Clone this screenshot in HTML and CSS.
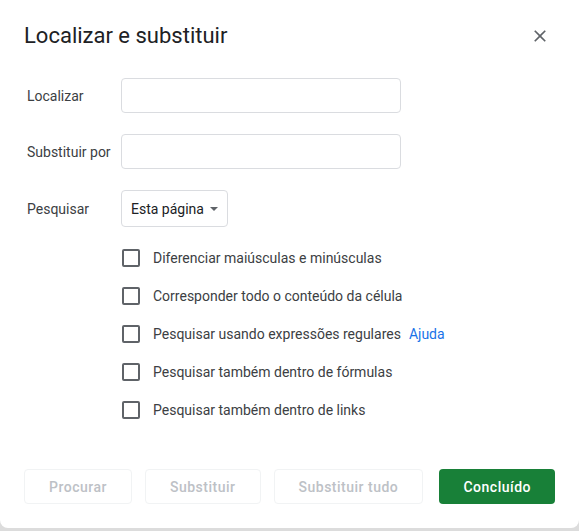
FILE: index.html
```html
<!DOCTYPE html>
<html lang="pt">
<head>
<meta charset="utf-8">
<title>Localizar e substituir</title>
<link rel="stylesheet" href="styles.css">
</head>
<body>
<div class="dialog">
  <div class="header">
    <div class="title">Localizar e substituir</div>
    <svg class="close" width="20" height="20" viewBox="0 0 24 24"><path d="M19 6.41 17.59 5 12 10.59 6.41 5 5 6.41 10.59 12 5 17.59 6.41 19 12 13.41 17.59 19 19 17.59 13.41 12z" fill="#5f6368"/></svg>
  </div>
  <div class="form">
    <div class="row">
      <div class="label">Localizar</div>
      <div class="input"></div>
    </div>
    <div class="row">
      <div class="label">Substituir por</div>
      <div class="input"></div>
    </div>
    <div class="row">
      <div class="label">Pesquisar</div>
      <div class="select">Esta página<span class="arrow"></span></div>
    </div>
  </div>
  <div class="options">
    <div class="opt"><span class="box"></span><span>Diferenciar maiúsculas e minúsculas</span></div>
    <div class="opt"><span class="box"></span><span>Corresponder todo o conteúdo da célula</span></div>
    <div class="opt"><span class="box"></span><span>Pesquisar usando expressões regulares</span><span class="link">Ajuda</span></div>
    <div class="opt"><span class="box"></span><span>Pesquisar também dentro de fórmulas</span></div>
    <div class="opt"><span class="box"></span><span>Pesquisar também dentro de links</span></div>
  </div>
  <div class="buttons">
    <div class="btn disabled">Procurar</div>
    <div class="btn disabled">Substituir</div>
    <div class="btn disabled">Substituir tudo</div>
    <div class="btn primary">Concluído</div>
  </div>
</div>
</body>
</html>
```
FILE: styles.css
```css
html, body {
  margin: 0;
  padding: 0;
}
body {
  width: 579px;
  height: 531px;
  background: #dcdcdc;
  font-family: Roboto, "Liberation Sans", Arial, sans-serif;
  overflow: hidden;
}
.dialog {
  box-sizing: border-box;
  width: 579px;
  height: 528px;
  background: #fff;
  border-radius: 0 0 8px 8px;
  padding: 22px 24px 24px 24px;
  display: flex;
  flex-direction: column;
}
.header {
  display: flex;
  align-items: center;
  justify-content: space-between;
  height: 28px;
}
.title {
  font-size: 22px;
  line-height: 28px;
  color: #202124;
}
.close {
  margin-right: 5px;
}
.form {
  margin-top: 28px;
  display: flex;
  flex-direction: column;
  gap: 21px;
}
.row {
  display: flex;
  align-items: center;
}
.label {
  box-sizing: border-box;
  width: 97px;
  padding-left: 3px;
  font-size: 14px;
  color: #3c4043;
}
.input {
  box-sizing: border-box;
  width: 280px;
  height: 35px;
  border: 1px solid #dadce0;
  border-radius: 4px;
}
.select {
  box-sizing: border-box;
  height: 37px;
  border: 1px solid #dadce0;
  border-radius: 4px;
  padding: 0 9px 0 9px;
  display: flex;
  align-items: center;
  font-size: 14px;
  color: #202124;
}
.arrow {
  width: 0;
  height: 0;
  border-left: 4px solid transparent;
  border-right: 4px solid transparent;
  border-top: 4px solid #5f6368;
  margin-left: 6px;
}
.options {
  margin-top: 22px;
  margin-left: 98px;
  display: flex;
  flex-direction: column;
  gap: 20px;
}
.opt {
  display: flex;
  align-items: center;
  height: 18px;
  font-size: 14px;
  color: #3c4043;
}
.box {
  box-sizing: border-box;
  width: 18px;
  height: 18px;
  border: 2px solid #5f6368;
  border-radius: 2px;
  margin-right: 13px;
  flex: none;
}
.link {
  color: #1a73e8;
  margin-left: 8px;
}
.buttons {
  margin-top: auto;
  display: flex;
  gap: 13px;
}
.btn {
  box-sizing: border-box;
  height: 35px;
  padding: 0 24px;
  display: flex;
  align-items: center;
  justify-content: center;
  border-radius: 4px;
  font-size: 14px;
  font-weight: 500;
  letter-spacing: 0.5px;
  white-space: nowrap;
  flex: none;
}
.disabled {
  border: 1px solid #f1f3f4;
  color: #bdc1c6;
}
.primary {
  background: #188038;
  color: #fff;
  margin-left: auto;
}
```
